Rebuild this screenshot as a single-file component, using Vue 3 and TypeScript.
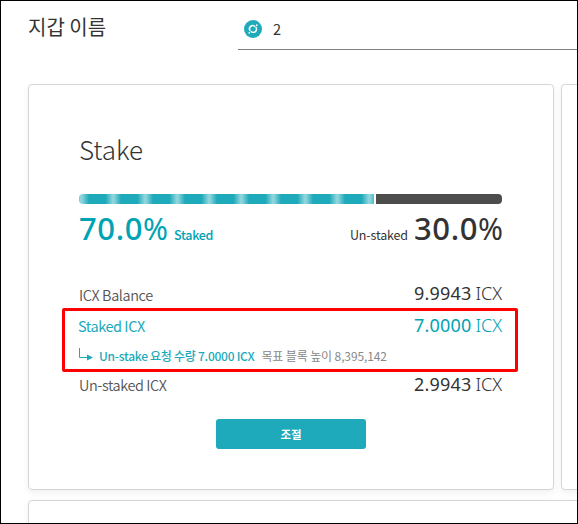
<script setup lang="ts">
interface BalanceRow {
  label: string
  amount: string
  tone: 'plain' | 'accent'
}

const walletName = '2'
const stakedPercent = 70
const balance: BalanceRow = { label: 'ICX Balance', amount: '9.9943', tone: 'plain' }
const staked: BalanceRow = { label: 'Staked ICX', amount: '7.0000', tone: 'accent' }
const unstaked: BalanceRow = { label: 'Un-staked ICX', amount: '2.9943', tone: 'plain' }
</script>

<template>
  <div class="frame">
    <header class="wallet">
      <h1 class="wallet-title">지갑 이름</h1>
      <div class="wallet-select">
        <svg class="coin" viewBox="0 0 18 18" aria-hidden="true">
          <circle cx="9" cy="9" r="9" fill="#1eaabb" />
          <g fill="none" stroke="#fff" stroke-width="1.4">
            <path d="M6.3 11A3.2 3.2 0 0 1 11.2 6.7" />
            <path d="M11.7 7A3.2 3.2 0 0 1 6.8 11.3" />
          </g>
          <circle cx="12.8" cy="5.2" r=".85" fill="#fff" />
          <circle cx="5.2" cy="12.8" r=".85" fill="#fff" />
        </svg>
        <span class="wallet-name">{{ walletName }}</span>
      </div>
    </header>

    <main class="cards">
      <section class="card stake">
        <h2 class="stake-title">Stake</h2>
        <div class="bar">
          <div class="bar-staked" :style="{ width: stakedPercent + '%' }"></div>
          <div class="bar-rest"></div>
        </div>
        <div class="percents">
          <p class="percent accent"><span class="figure">70.0<i>%</i></span><span class="caption">Staked</span></p>
          <p class="percent right"><span class="caption">Un-staked</span><span class="figure">30.0<i>%</i></span></p>
        </div>

        <div class="row first">
          <span class="label">{{ balance.label }}</span>
          <span class="amount">{{ balance.amount }}<i>ICX</i></span>
        </div>
        <div class="highlight">
          <div class="row" :class="staked.tone">
            <span class="label">{{ staked.label }}</span>
            <span class="amount">{{ staked.amount }}<i>ICX</i></span>
          </div>
          <div class="request">
            <svg class="branch" viewBox="0 0 14 12" aria-hidden="true">
              <path d="M.5 0V9.5H9" fill="none" stroke="#1aaaba" />
              <path d="M8 6.5L14 9.5L8 12.5Z" fill="#1aaaba" />
            </svg>
            <span class="request-amount">Un-stake 요청 수량 7.0000 ICX</span>
            <span class="request-height">목표 블록 높이 8,395,142</span>
          </div>
        </div>
        <div class="row last">
          <span class="label">{{ unstaked.label }}</span>
          <span class="amount">{{ unstaked.amount }}<i>ICX</i></span>
        </div>

        <button class="adjust" type="button">조절</button>
      </section>
      <section class="card side"></section>
      <section class="card below"></section>
    </main>
  </div>
</template>

<style>
body {
  background: #fff;
}
</style>

<style scoped>
.frame {
  box-sizing: border-box;
  width: 578px;
  height: 524px;
  border: 1px solid #000;
  overflow: hidden;
  background: #fff;
  color: #333;
  font-family: "Noto Sans CJK KR", sans-serif;
}
h1, h2, p {
  margin: 0;
}
i {
  font-style: normal;
}
.wallet {
  display: flex;
  height: 49px;
  padding-left: 27px;
}
.wallet-title {
  width: 210px;
  font-size: 20px;
  line-height: 52px;
  font-weight: 400;
  letter-spacing: 0;
}
.wallet-select {
  box-sizing: border-box;
  flex: 1;
  display: flex;
  align-items: center;
  height: 49px;
  padding: 7px 0 0 6px;
  border-bottom: 1px solid #808080;
}
.coin {
  width: 18px;
  height: 18px;
  margin-right: 11px;
}
.wallet-name {
  font-size: 14.5px;
  line-height: 20px;
}
.cards {
  display: grid;
  grid-template-columns: 526px 526px;
  grid-template-rows: 406px 200px;
  gap: 10px 7px;
  padding: 34px 0 0 27px;
}
.card {
  box-sizing: border-box;
  border: 1px solid #d5d5d5;
  border-radius: 4px;
  background: #fff;
  box-shadow: 0 3px 7px rgba(0, 0, 0, .06);
}
.below {
  grid-column: 1 / 3;
}
.stake {
  display: flex;
  flex-direction: column;
  padding: 44px 50px 0;
}
.stake-title {
  height: 65px;
  font-size: 26px;
  line-height: 40px;
  font-weight: 300;
  letter-spacing: -.1px;
}
.bar {
  display: flex;
  gap: 2px;
  width: 423px;
  height: 10px;
  border-radius: 4px;
  overflow: hidden;
}
.bar-staked {
  flex: none;
  box-sizing: border-box;
  max-width: 295px;
  background: repeating-linear-gradient(90deg, #1eaabb 0, #1eaabb 10.5px, #8dd4dc 17.5px, #8dd4dc 19px, #1eaabb 26px, #1eaabb 32px) -16px 0 / 480px 10px;
}
.bar-rest {
  flex: 1;
  background: #4d4d4d;
}
.percents {
  display: flex;
  justify-content: space-between;
  height: 73px;
}
.percent {
  display: flex;
  align-items: baseline;
  height: 48px;
  white-space: nowrap;
}
.figure {
  font-family: "Noto Sans", sans-serif;
  font-size: 31px;
  line-height: 49px;
  font-weight: 500;
  letter-spacing: .6px;
}
.figure i {
  font-weight: 400;
  letter-spacing: 0;
  display: inline-block;
  width: 25px;
  margin-right: 0;
  transform: scaleX(.97);
  transform-origin: left;
}
.caption {
  font-size: 12.5px;
  font-weight: 400;
  letter-spacing: -.15px;
}
.accent {
  color: #00a3b4;
}
.accent .caption {
  margin-left: 6px;
  font-weight: 500;
  letter-spacing: -.3px;
}
.right .caption {
  margin-right: 6px;
}
.row {
  display: flex;
  justify-content: space-between;
  align-items: center;
  height: 30px;
  white-space: nowrap;
}
.row .label {
  font-size: 14.5px;
  font-weight: 350;
  letter-spacing: -.4px;
  color: #555;
}
.row.accent .label {
  margin: -2px 0 0 -1px;
  color: #1aaaba;
  font-weight: 400;
  letter-spacing: -.45px;
}
.amount {
  font-family: "Noto Sans", sans-serif;
  font-size: 18px;
  line-height: 24px;
  font-weight: 400;
  margin-right: 1px;
  padding-bottom: 3px;
  letter-spacing: .2px;
}
.amount i {
  margin-left: 4px;
  font-weight: 300;
  letter-spacing: -.1px;
}
.row.first {
  box-sizing: border-box;
  height: 31px;
  padding-top: 4px;
}
.highlight {
  box-sizing: border-box;
  width: 456px;
  height: 64px;
  margin-left: -17px;
  padding: 0 12px 0 14px;
  border: 3px solid #f00;
  border-radius: 2px;
}
.request {
  display: flex;
  align-items: center;
  height: 28px;
  font-size: 12px;
  letter-spacing: -.27px;
  white-space: nowrap;
}
.branch {
  width: 14px;
  height: 12px;
  margin: 0 6px 2px 0;
  overflow: visible;
}
.request-amount {
  margin-right: 7px;
  color: #1aaaba;
  font-weight: 500;
}
.request-height {
  color: #888;
  letter-spacing: -.12px;
}
.row.last {
  height: 26px;
}
.row.last .label {
  margin-top: -2px;
}
.adjust {
  align-self: center;
  width: 150px;
  height: 30px;
  margin-top: 21px;
  padding: 0;
  border: 0;
  border-radius: 3px;
  background: #1eaabb;
  color: #fff;
  font: 700 11.5px/30px "Noto Sans CJK KR", sans-serif;
}
</style>
